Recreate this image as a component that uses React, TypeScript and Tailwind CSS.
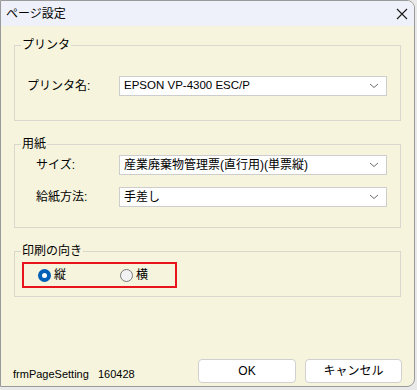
import React from "react";

const font = { fontFamily: '"Liberation Sans", "Noto Sans CJK JP", sans-serif' };

function Chevron() {
  return (
    <svg width="10" height="6" viewBox="0 0 10 6" className="shrink-0">
      <path d="M1 1 L5 4.5 L9 1" fill="none" stroke="#6b6b6b" strokeWidth="1" />
    </svg>
  );
}

function Select({ value, latin }: { value: string; latin?: boolean }) {
  return (
    <div className={`flex h-[20px] w-[268px] items-center justify-between border border-[#cdcdcd] bg-white pl-[4px] pr-[7px] leading-none text-black ${latin ? "text-[11.5px]" : "text-[12px]"}`}>
      <span className="whitespace-nowrap">{value}</span>
      <Chevron />
    </div>
  );
}

function Group({ title, className, children }: { title: string; className: string; children: React.ReactNode }) {
  return (
    <div className={`relative mx-[13px] border border-[#d9d8cf] ${className}`}>
      <span className="absolute left-[6px] top-[-9px] bg-[#f6f4dd] px-[1px] text-[12px] leading-[16px] text-black">{title}</span>
      {children}
    </div>
  );
}

export default function App() {
  return (
    <div className="h-[390px] w-[417px] bg-[#e9e9e9]" style={font}>
      <div className="flex h-[387px] w-[415px] flex-col overflow-hidden rounded-br-[8px] rounded-tr-[8px] border border-[#9a9a9a] bg-[#f6f4dd]">
        <div className="flex h-[25px] shrink-0 items-center justify-between bg-[#eef1f9] pl-[5px] pr-[5px]">
          <span className="text-[12px] leading-none text-black">ページ設定</span>
          <svg width="12" height="12" viewBox="0 0 12 12" className="mr-[1px]">
            <path d="M1 1 L11 11 M11 1 L1 11" stroke="#1a1a1a" strokeWidth="1.1" />
          </svg>
        </div>

        <Group title="プリンタ" className="mt-[19px] h-[76px]">
          <div className="mt-[30px] flex items-center">
            <span className="box-content w-[92px] pl-[12px] text-[12px] leading-none text-black">プリンタ名:</span>
            <Select value="EPSON VP-4300 ESC/P" latin />
          </div>
        </Group>

        <Group title="用紙" className="mt-[23px] h-[84px]">
          <div className="mt-[10px] flex flex-col gap-[12px]">
            <div className="flex items-center">
              <span className="box-content w-[83px] pl-[21px] text-[12px] leading-none text-black">サイズ:</span>
              <Select value="産業廃棄物管理票(直行用)(単票縦)" />
            </div>
            <div className="flex items-center">
              <span className="box-content w-[83px] pl-[21px] text-[12px] leading-none text-black">給紙方法:</span>
              <Select value="手差し" />
            </div>
          </div>
        </Group>

        <Group title="印刷の向き" className="mt-[23px] h-[46px]">
          <div className="ml-[7px] mt-[10px] flex h-[26px] w-[155px] items-center border-2 border-[#e8141b] pl-[14px]">
            <div className="flex w-[82px] items-center gap-[3px]">
              <span className="flex h-[13px] w-[13px] items-center justify-center rounded-full bg-[#0060b8]">
                <span className="h-[5px] w-[5px] rounded-full bg-white" />
              </span>
              <span className="text-[12px] leading-none text-black">縦</span>
            </div>
            <div className="flex items-center gap-[3px]">
              <span className="h-[13px] w-[13px] rounded-full border border-[#7a7a7a] bg-[#f2f2f2]" />
              <span className="text-[12px] leading-none text-black">横</span>
            </div>
          </div>
        </Group>

        <div className="mb-[3px] mt-auto flex items-end justify-between pl-[12px] pr-[12px]">
          <span className="mb-[3px] whitespace-pre text-[11px] leading-none text-black">frmPageSetting   160428</span>
          <div className="flex gap-[9px]">
            <div className="flex h-[24px] w-[98px] items-center justify-center rounded-[4px] border border-[#d0d0d0] bg-white text-[12px] text-black">OK</div>
            <div className="flex h-[24px] w-[97px] items-center justify-center rounded-[4px] border border-[#d0d0d0] bg-white text-[12px] text-black">キャンセル</div>
          </div>
        </div>
      </div>
    </div>
  );
}
